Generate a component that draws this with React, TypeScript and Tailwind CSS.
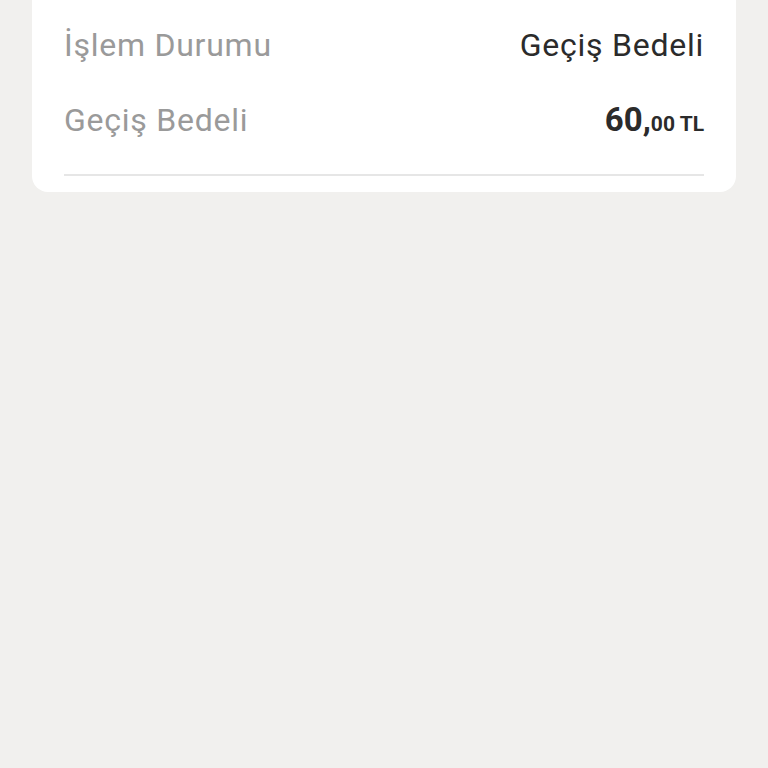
export default function App() {
  return (
    <div className="min-h-[768px] w-full bg-[#f1f0ee]" style={{ fontFamily: "Roboto, 'Noto Sans', sans-serif" }}>
      <div className="mx-8 rounded-b-2xl bg-white px-8 pt-[25px] pb-[16px]">
        <div className="flex h-10 items-baseline justify-between text-[32px] leading-10 tracking-[0.75px]">
          <span className="text-[#9a9a9a]">İşlem Durumu</span>
          <span className="text-[#2b2b2b]">Geçiş Bedeli</span>
        </div>
        <div className="mt-[35px] flex h-10 items-baseline justify-between leading-10">
          <span className="text-[32px] tracking-[0.75px] text-[#9a9a9a]">Geçiş Bedeli</span>
          <span className="font-bold text-[#2b2b2b]">
            <span className="text-[33px]">60,</span>
            <span className="text-[21px]">00 TL</span>
          </span>
        </div>
        <div className="mt-[34px] h-[2px] bg-[#e6e6e6]" />
      </div>
    </div>
  );
}
